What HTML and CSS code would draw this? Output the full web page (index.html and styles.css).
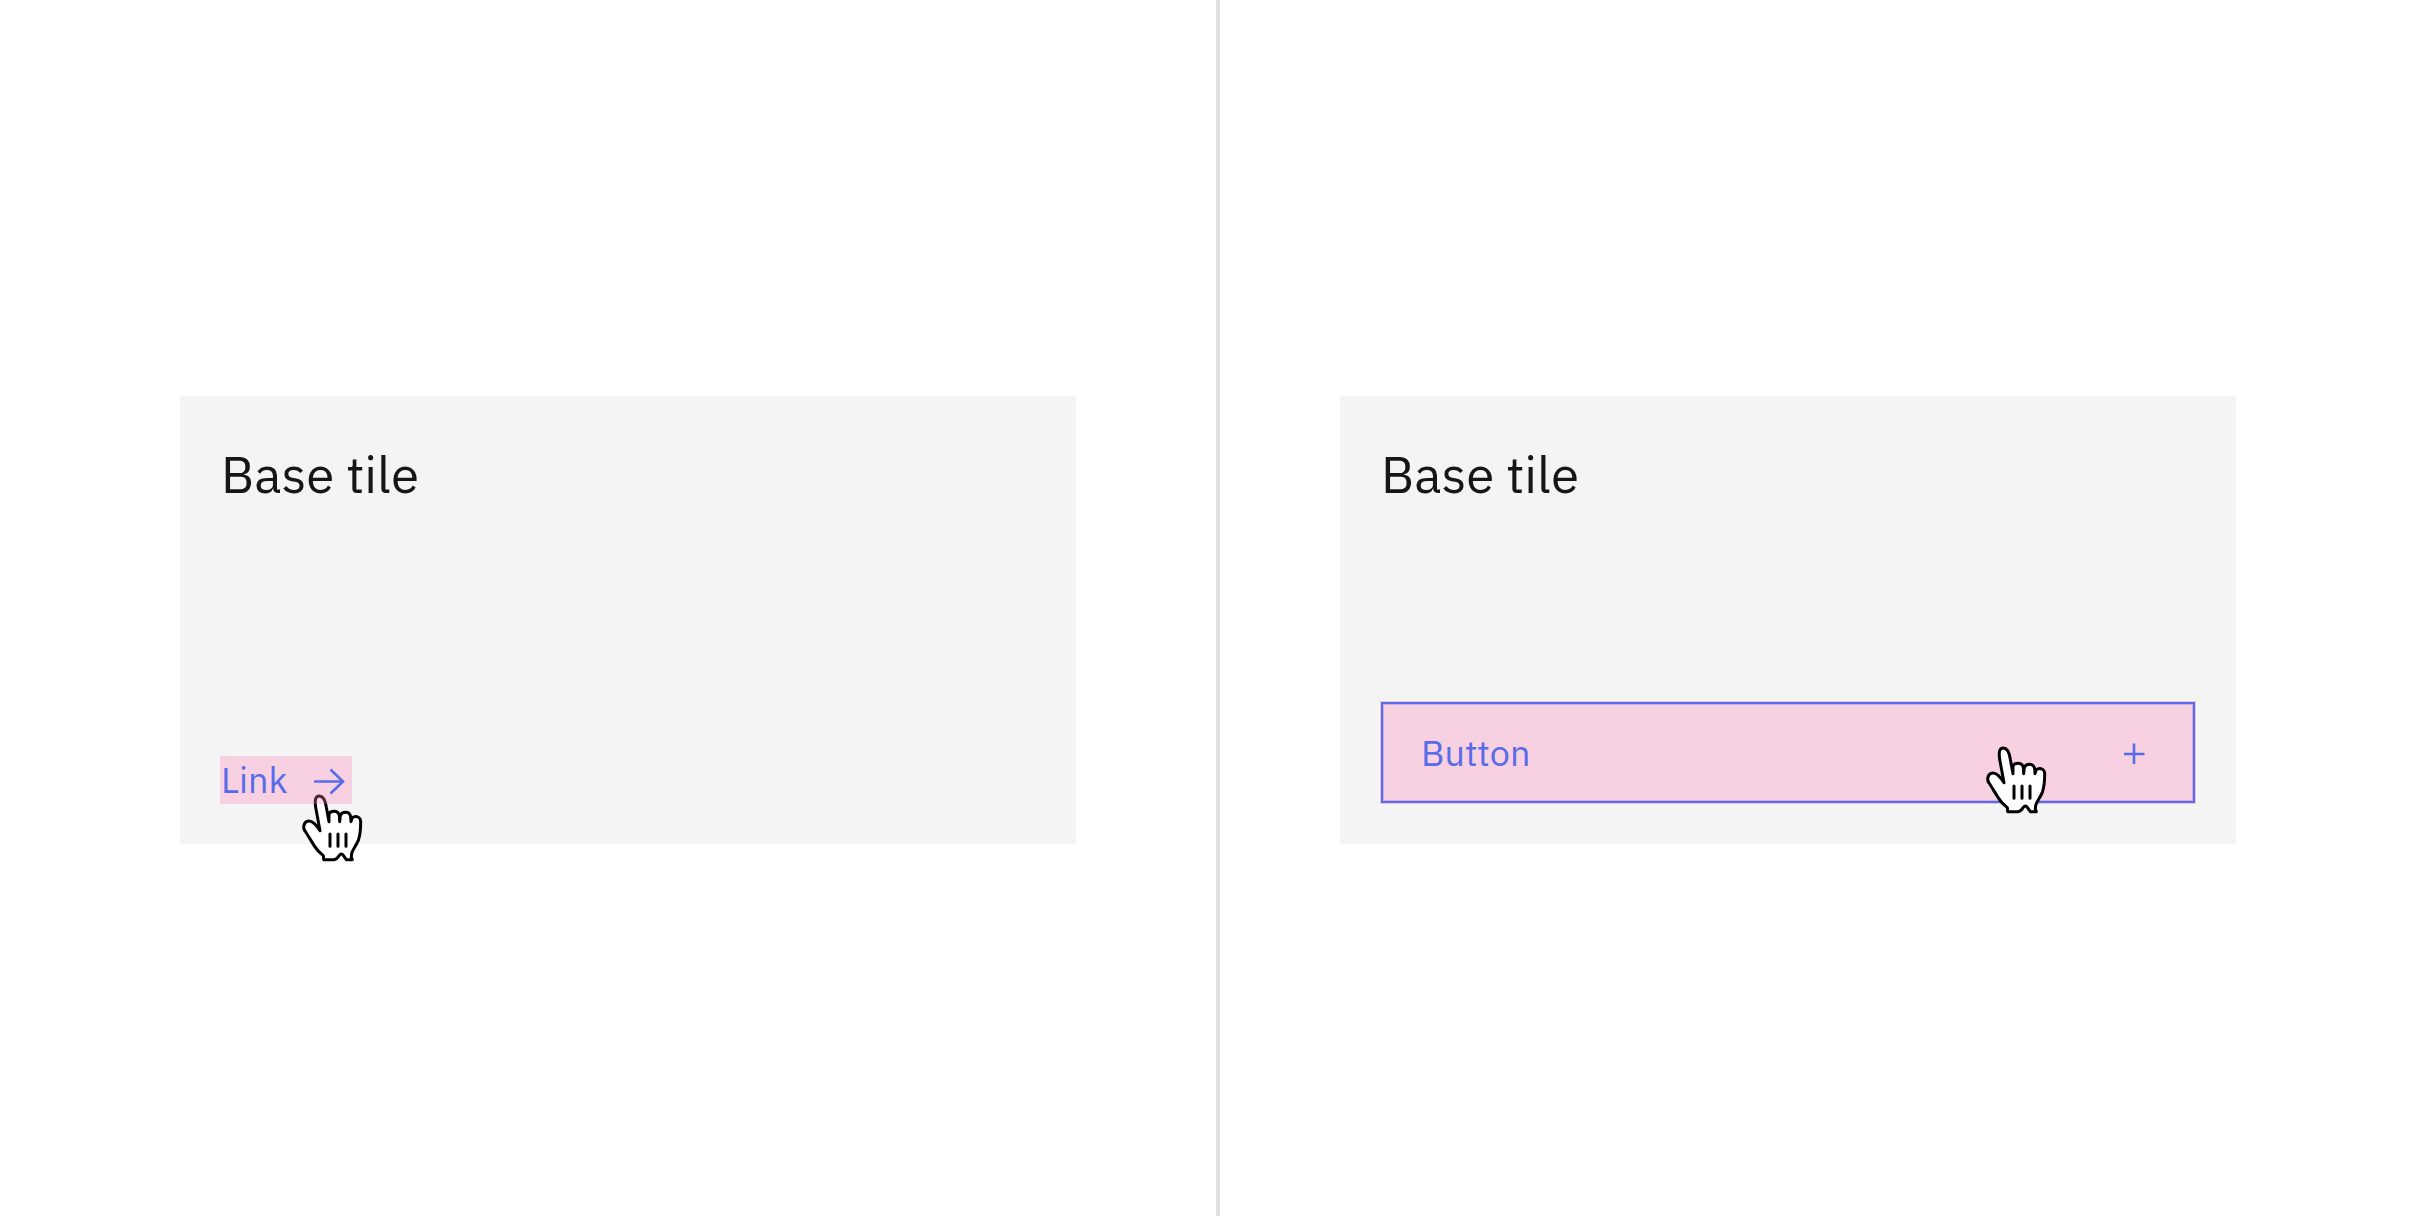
FILE: index.html
```html
<!DOCTYPE html>
<html lang="en">
<head>
<meta charset="utf-8">
<meta name="viewport" content="width=device-width, initial-scale=1">
<title>Base tile</title>
<link rel="stylesheet" href="styles.css">
</head>
<body>
<svg class="symbols" aria-hidden="true">
  <symbol id="pointer" viewBox="300 153 192 216">
    <path class="hand" d="M360 272L347 202C344 180 346 168 358 168C370 168 376 182 379 202L387 245L387 222C389 216 394 214 402 214C411 214 416 219 418 226L419 245L421 226C424 219 429 217 437 217C446 217 450 222 452 230L453 245L456 234C461 230 466 229 471 230C479 232 482 238 482 247C482 268 481 284 475 301C469 316 459 326 455 340L454 352L457 359L439 359L430 346Q424 338 418 346Q411 359 402 359L371 359L370 347Q354 335 344 319C334 304 324 286 315 273C307 262 312 244 326 243C339 242 349 255 360 272Z"/>
    <path class="lines" d="M390 282V319M414 282V319M438 282V319"/>
  </symbol>
</svg>
<main class="examples">
  <section class="panel panel-link">
    <article class="tile">
      <h2 class="title">Base tile</h2>
      <div class="action">
        <a class="link" href="#"><span>Link</span><svg class="arrow" viewBox="0 0 40 40" aria-hidden="true"><path d="M2 21.5H32M18.500 9.500L31 21.500L18.500 33.500"/></svg></a>
        <svg class="pointer pointer-link" aria-hidden="true"><use href="#pointer"/></svg>
      </div>
    </article>
  </section>
  <section class="panel panel-button">
    <article class="tile">
      <h2 class="title">Base tile</h2>
      <div class="action">
        <button class="button" type="button"><span>Button</span><svg class="plus" viewBox="0 0 32 32" aria-hidden="true"><path d="M6 17H26.500M16 6.500V27"/></svg></button>
        <svg class="pointer pointer-button" aria-hidden="true"><use href="#pointer"/></svg>
      </div>
    </article>
  </section>
</main>
</body>
</html>
```
FILE: styles.css
```css
* { box-sizing: border-box; }

body {
  margin: 0;
  background: #fff;
  color: #161616;
  font-family: "IBM Plex Sans", Roboto, sans-serif;
}

.symbols {
  position: absolute;
  width: 0;
  height: 0;
}

.examples {
  display: grid;
  grid-template-columns: 1fr 1fr;
  min-height: 100vh;
}

.panel { padding-top: 396px; }

.panel-link {
  padding-left: 180px;
  padding-right: 140px;
}

.panel-button {
  padding-left: 120px;
  padding-right: 196px;
  border-left: 4px solid #e0e0e0;
}

.tile {
  display: flex;
  flex-direction: column;
  justify-content: space-between;
  min-height: 448px;
  padding: 40px;
  background: #f4f4f4;
}

.title {
  margin: 0;
  padding: 6px 0 0 1px;
  font-size: 51px;
  line-height: 64px;
  font-weight: 400;
}

.action {
  position: relative;
  display: flex;
}

.link {
  position: relative;
  z-index: 1;
  display: flex;
  align-items: center;
  justify-content: space-between;
  width: 132px;
  height: 48px;
  padding-left: 1px;
  background: rgba(255, 126, 182, 0.3);
  color: #586be9;
  font-size: 36px;
  line-height: 48px;
  text-decoration: none;
}

.button {
  display: flex;
  flex: 1;
  align-items: center;
  justify-content: space-between;
  height: 103px;
  padding: 0 45px 0 40px;
  border: 1px solid #eac8e1;
  background: #f7d1e1;
  box-shadow: inset 0 0 0 2px #586be9, inset 0 0 0 3px #cdaee3;
  color: #586be9;
  font-family: inherit;
  font-size: 36px;
  line-height: 48px;
}

.arrow,
.plus {
  fill: none;
  stroke: #586be9;
  stroke-width: 2.6;
}

.arrow {
  width: 40px;
  height: 40px;
}

.plus {
  width: 32px;
  height: 32px;
}

.pointer {
  position: absolute;
  width: 64px;
  height: 72px;
}

.pointer-link {
  left: 80px;
  top: 35px;
}

.pointer-button {
  right: 148px;
  top: 42px;
}

.hand {
  fill: #fff;
  stroke: #000;
  stroke-width: 9;
  stroke-linejoin: round;
}

.lines {
  stroke: #000;
  stroke-width: 9;
  stroke-linecap: round;
}
```
